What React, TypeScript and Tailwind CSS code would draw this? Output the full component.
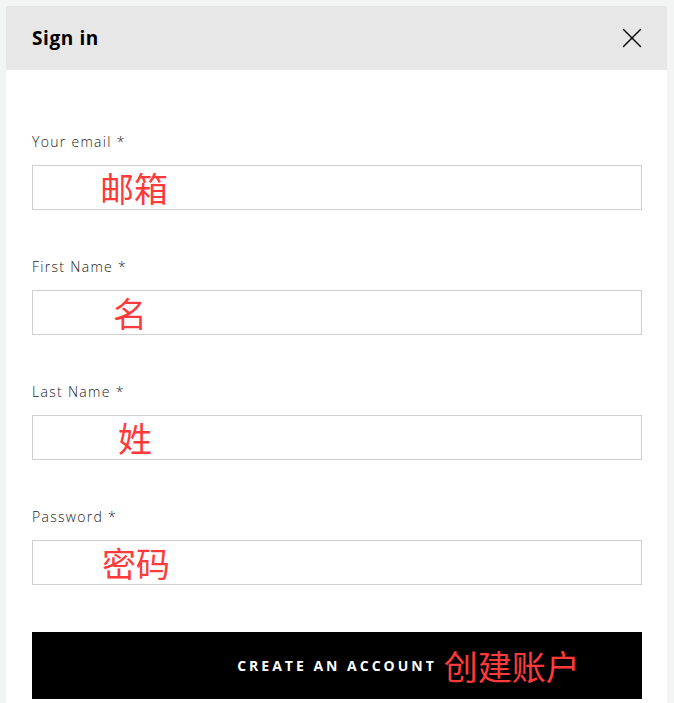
import { X } from 'lucide-react'

const fields = [
  { label: 'Your email *', note: '邮箱', indent: 'pl-[67px]' },
  { label: 'First Name *', note: '名', indent: 'pl-[80px]' },
  { label: 'Last Name *', note: '姓', indent: 'pl-[85px]' },
  { label: 'Password *', note: '密码', indent: 'pl-[69px]' },
]

export default function App() {
  return (
    <div className="min-h-[703px] bg-[#f3f4f4] pt-[6px] pl-[6px] font-['Open_Sans','Noto_Sans_CJK_SC',sans-serif]">
      <div className="w-[661px] bg-white">
        {/* Header */}
        <div className="flex h-[64px] items-center justify-between bg-[#e7e7e7] pl-[26px] pr-[18px]">
          <h2 className="text-[19px] font-bold tracking-[0.6px] text-black">Sign in</h2>
          <X className="h-[34px] w-[34px] text-black" strokeWidth={1} />
        </div>

        {/* Form */}
        <div className="pl-[26px] pr-[25px] pt-[62px] pb-[4px]">
          {fields.map((f) => (
            <div key={f.label} className="mb-[47px]">
              <label className="mb-[13px] block text-[14px] font-light leading-[20px] tracking-[1.3px] text-[#222]">
                {f.label}
              </label>
              <div className={`flex h-[45px] items-center border border-[#cfcfcf] ${f.indent}`}>
                <span className="font-['Noto_Sans_CJK_SC',sans-serif] text-[34px] leading-none text-[#ff3a3a]">
                  {f.note}
                </span>
              </div>
            </div>
          ))}

          <button className="flex h-[67px] w-full items-center justify-center bg-black">
            <span className="relative text-[14px] font-bold tracking-[3px] text-white">
              CREATE AN ACCOUNT
              <span className="absolute left-full top-1/2 ml-[7px] -translate-y-1/2 whitespace-nowrap font-['Noto_Sans_CJK_SC',sans-serif] text-[34px] font-normal leading-none tracking-normal text-[#ff3a3a]">
                创建账户
              </span>
            </span>
          </button>
        </div>
      </div>
    </div>
  )
}
